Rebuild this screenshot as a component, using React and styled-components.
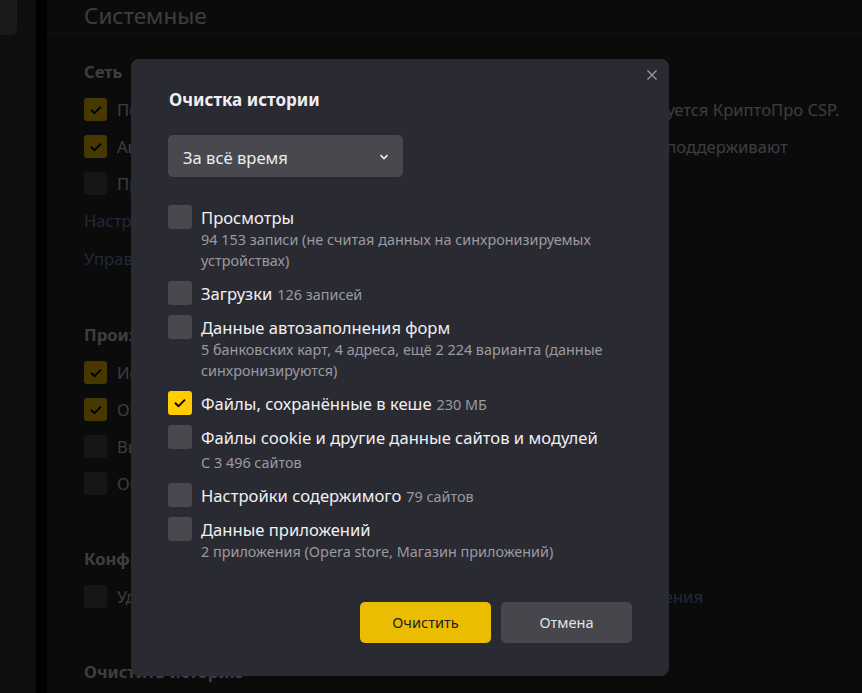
import React from 'react';
import styled, { createGlobalStyle } from 'styled-components';

const GlobalStyle = createGlobalStyle`
  html, body {
    margin: 0;
    padding: 0;
    background: #25252b;
    font-family: "Noto Sans", "Open Sans", sans-serif;
    overflow: hidden;
  }
`;

const Check = () => (
  <svg width="14" height="14" viewBox="0 0 14 14">
    <path d="M2.5 7.2 L5.6 10.2 L11.5 4.2" fill="none" stroke="#000" strokeWidth="1.9" strokeLinecap="round" strokeLinejoin="round" />
  </svg>
);

const settings = [
  {
    title: 'Сеть',
    rows: [
      { checked: true, text: 'Подключаться к сайтам, использующим шифрование по ГОСТ. Требуется КриптоПро CSP.' },
      { checked: true, text: 'Автоматически переключаться на HTTPS на тех сайтах, которые это поддерживают' },
      { checked: false, text: 'Предупреждать о небезопасных формах' },
      { link: 'Настройки прокси-сервера' },
      { link: 'Управление сертификатами' },
    ],
  },
  {
    title: 'Производительность',
    rows: [
      { checked: true, text: 'Использовать аппаратное ускорение' },
      { checked: true, text: 'Оптимизировать изображения' },
      { checked: false, text: 'Выгружать из памяти вкладки' },
      { checked: false, text: 'Обновлять браузер в фоне' },
    ],
  },
  {
    title: 'Конфиденциальность',
    rows: [
      { checked: false, text: 'Удалять cookie и данные при закрытии браузера', tail: 'Настроить исключения' },
    ],
  },
  { title: 'Очистить историю', rows: [] },
];

const items = [
  { title: 'Просмотры', sub: '94 153 записи (не считая данных на синхронизируемых устройствах)' },
  { title: 'Загрузки', inline: '126 записей' },
  { title: 'Данные автозаполнения форм', sub: '5 банковских карт, 4 адреса, ещё 2 224 варианта (данные синхронизируются)' },
  { title: 'Файлы, сохранённые в кеше', inline: '230 МБ', checked: true },
  { title: 'Файлы cookie и другие данные сайтов и модулей', sub: 'С 3 496 сайтов', spaced: true },
  { title: 'Настройки содержимого', inline: '79 сайтов' },
  { title: 'Данные приложений', sub: '2 приложения (Opera store, Магазин приложений)' },
];

export default function App() {
  return (
    <>
      <GlobalStyle />
      <Page>
        <Sidebar>
          <SidebarItem />
        </Sidebar>
        <Gutter />
        <Main>
          <Header>Системные</Header>
          <Content>
            {settings.map((s) => (
              <Section key={s.title}>
                <SectionTitle>{s.title}</SectionTitle>
                {s.rows.map((r, i) =>
                  r.link ? (
                    <LinkRow key={i}>{r.link}</LinkRow>
                  ) : (
                    <Row key={i}>
                      <PageBox $checked={r.checked}>{r.checked && <Check />}</PageBox>
                      <RowText>
                        {r.text}
                        {r.tail && <Tail> {r.tail}</Tail>}
                      </RowText>
                    </Row>
                  )
                )}
              </Section>
            ))}
          </Content>
        </Main>
        <Overlay />
        <Dialog>
          <Close>
            <svg width="10" height="10" viewBox="0 0 10 10">
              <path d="M0.5 0.5 L9.5 9.5 M9.5 0.5 L0.5 9.5" stroke="#9c9ca2" strokeWidth="1.2" />
            </svg>
          </Close>
          <Title>Очистка истории</Title>
          <Select>
            <span>За всё время</span>
            <svg width="10" height="6" viewBox="0 0 10 6">
              <path d="M1.5 1.2 L5 4.6 L8.5 1.2" fill="none" stroke="#e6e6e8" strokeWidth="1.8" />
            </svg>
          </Select>
          <List>
            {items.map((it) => (
              <Item key={it.title}>
                <Box $checked={it.checked}>{it.checked && <Check />}</Box>
                <ItemText>
                  <ItemTitle>
                    {it.title}
                    {it.inline && <Inline>{it.inline}</Inline>}
                  </ItemTitle>
                  {it.sub && <Sub $spaced={it.spaced}>{it.sub}</Sub>}
                </ItemText>
              </Item>
            ))}
          </List>
          <Buttons>
            <Button $primary>Очистить</Button>
            <Button>Отмена</Button>
          </Buttons>
        </Dialog>
      </Page>
    </>
  );
}

const Page = styled.div`
  position: relative;
  display: flex;
  width: 862px;
  height: 693px;
  overflow: hidden;
  background: #25252b;
`;

const Sidebar = styled.div`
  width: 36px;
  flex-shrink: 0;
  background: #2f2f35;
`;

const SidebarItem = styled.div`
  width: 17px;
  height: 35px;
  background: #57575d;
  border-bottom-right-radius: 5px;
`;

const Gutter = styled.div`
  width: 11px;
  flex-shrink: 0;
  background: #000;
`;

const Main = styled.div`
  flex: 1;
  min-width: 0;
`;

const Header = styled.div`
  height: 33px;
  padding: 0 37px;
  margin-bottom: 14px;
  border-bottom: 1px solid #3a3a42;
  font-size: 22.5px;
  line-height: 31px;
  color: #cbcbcf;
`;

const Content = styled.div`
  padding: 6px 37px 0;
`;

const Section = styled.div`
  margin-bottom: 39px;
`;

const SectionTitle = styled.div`
  height: 37px;
  font-size: 16.6px;
  font-weight: 700;
  line-height: 35px;
  color: #d0d0d4;
  white-space: nowrap;
`;

const Row = styled.div`
  display: flex;
  align-items: center;
  height: 37px;
  gap: 10px;
  white-space: nowrap;
`;

const PageBox = styled.div`
  width: 23px;
  height: 23px;
  flex-shrink: 0;
  border-radius: 3px;
  background: ${(p) => (p.$checked ? '#eabd00' : '#4a4a50')};
  display: flex;
  align-items: center;
  justify-content: center;
`;

const RowText = styled.div`
  font-size: 16.6px;
  color: #cbcbcf;
`;

const Tail = styled.span`
  color: #6a8cb4;
`;

const LinkRow = styled.div`
  height: 38px;
  font-size: 16.6px;
  line-height: 38px;
  color: #6a8cb4;
  white-space: nowrap;
`;

const Overlay = styled.div`
  position: absolute;
  inset: 0;
  background: rgba(0, 0, 0, 0.7);
`;

const Dialog = styled.div`
  position: absolute;
  left: 131px;
  top: 59px;
  width: 538px;
  height: 617px;
  box-sizing: border-box;
  padding: 29px 37px 33px;
  border-radius: 8px;
  background: #2a2a32;
  display: flex;
  flex-direction: column;
`;

const Close = styled.div`
  position: absolute;
  top: 11px;
  right: 12px;
  width: 10px;
  height: 10px;
  display: flex;
`;

const Title = styled.div`
  font-size: 17px;
  font-weight: 700;
  line-height: 24px;
  color: #f0f0f2;
  padding-left: 1px;
`;

const Select = styled.div`
  margin-top: 23px;
  width: 235px;
  height: 42px;
  box-sizing: border-box;
  padding: 2px 14px 0 15px;
  border-radius: 5px;
  background: #48484e;
  display: flex;
  align-items: center;
  justify-content: space-between;
  font-size: 16.6px;
  color: #ececee;
`;

const List = styled.div`
  margin-top: 28px;
  display: flex;
  flex-direction: column;
  gap: 10px;
`;

const Item = styled.div`
  display: flex;
  gap: 9px;
`;

const Box = styled.div`
  width: 24px;
  height: 24px;
  flex-shrink: 0;
  border-radius: 3px;
  background: ${(p) => (p.$checked ? '#ffcc00' : '#48484e')};
  display: flex;
  align-items: center;
  justify-content: center;
`;

const ItemText = styled.div`
  display: flex;
  flex-direction: column;
`;

const ItemTitle = styled.div`
  height: 24px;
  font-size: 16.6px;
  line-height: 25px;
  color: #f0f0f2;
  white-space: nowrap;
`;

const Inline = styled.span`
  margin-left: 5px;
  font-size: 14.4px;
  line-height: 1;
  color: #9a9aa0;
`;

const Sub = styled.div`
  font-size: 14.4px;
  line-height: 21px;
  margin-top: ${(p) => (p.$spaced ? '3px' : '0')};
  color: #9a9aa0;
  max-width: 420px;
`;

const Buttons = styled.div`
  margin-top: auto;
  display: flex;
  justify-content: flex-end;
  gap: 10px;
`;

const Button = styled.div`
  width: 131px;
  height: 41px;
  box-sizing: border-box;
  padding-bottom: 2px;
  border-radius: 5px;
  display: flex;
  align-items: center;
  justify-content: center;
  font-size: 14.6px;
  background: ${(p) => (p.$primary ? '#ebbd00' : '#46464c')};
  color: ${(p) => (p.$primary ? '#1e1e1e' : '#e2e2e4')};
`;
